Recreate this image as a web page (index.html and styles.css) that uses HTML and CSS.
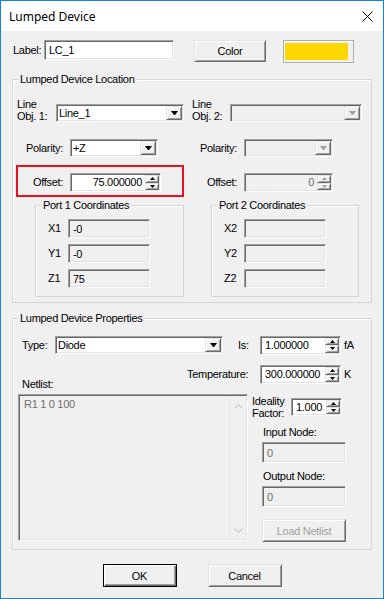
FILE: index.html
```html
<!DOCTYPE html>
<html lang="en">
<head>
    <meta charset="UTF-8">
    <meta name="viewport" content="width=device-width, initial-scale=1.0">
    <title>Lumped Device</title>
    <link rel="stylesheet" href="styles.css">
</head>
<body>
<div class="dlg">
    <div class="titlebar">
        <span class="title">Lumped Device</span>
        <svg class="close" width="11" height="11" viewBox="0 0 11 11"><path d="M0.5 0.5L10.5 10.5M10.5 0.5L0.5 10.5" stroke="#000" stroke-width="1" fill="none"/></svg>
    </div>

    <div class="client">
        <div class="label-row">
            <span class="lbl label-lbl">Label:</span>
            <div class="edit sunk label-edit">LC_1</div>
            <div class="btn raised color-btn">Color</div>
            <div class="swatch"><div class="swatch-fill"></div></div>
        </div>

        <!-- location -->
        <div class="frame group loc-group">
            <div class="group-title">Lumped Device Location</div>

            <div class="loc-row line-row">
                <div class="cell c1">
                    <span class="lbl two-line line1-lbl">Line<br>Obj. 1:</span>
                    <div class="combo sunk line1-combo">
                        <span class="combo-text">Line_1</span>
                        <span class="combo-btn raised"><svg width="7" height="4" viewBox="0 0 7 4"><path d="M0 0H7L4 4H3Z" fill="#000"/></svg></span>
                    </div>
                </div>
                <div class="cell c2">
                    <span class="lbl two-line line2-lbl">Line<br>Obj. 2:</span>
                    <div class="combo sunk off line2-combo">
                        <span class="combo-text"></span>
                        <span class="combo-btn raised"><svg width="7" height="4" viewBox="0 0 7 4"><path d="M0 0H7L4 4H3Z" fill="#a0a0a0"/></svg></span>
                    </div>
                </div>
            </div>

            <div class="loc-row pol-row">
                <div class="cell c1">
                    <span class="lbl rlbl pol1-lbl">Polarity:</span>
                    <div class="combo sunk pol1-combo">
                        <span class="combo-text">+Z</span>
                        <span class="combo-btn raised"><svg width="7" height="4" viewBox="0 0 7 4"><path d="M0 0H7L4 4H3Z" fill="#000"/></svg></span>
                    </div>
                </div>
                <div class="cell c2">
                    <span class="lbl rlbl pol2-lbl">Polarity:</span>
                    <div class="combo sunk off pol2-combo">
                        <span class="combo-text"></span>
                        <span class="combo-btn raised"><svg width="7" height="4" viewBox="0 0 7 4"><path d="M0 0H7L4 4H3Z" fill="#a0a0a0"/></svg></span>
                    </div>
                </div>
            </div>

            <div class="loc-row off-row">
                <div class="cell c1">
                    <div class="hl">
                        <span class="lbl rlbl off1-lbl">Offset:</span>
                        <div class="spin sunk off1-spin">
                            <span class="spin-text right">75.000000</span>
                            <span class="spin-btns">
                                <span class="raised"><svg width="5" height="3" viewBox="0 0 5 3"><path d="M2.5 0L5 3H0Z" fill="#000"/></svg></span>
                                <span class="raised"><svg width="5" height="3" viewBox="0 0 5 3"><path d="M0 0H5L2.5 3Z" fill="#000"/></svg></span>
                            </span>
                        </div>
                    </div>
                </div>
                <div class="cell c2">
                    <span class="lbl rlbl off2-lbl">Offset:</span>
                    <div class="spin sunk off off2-spin">
                        <span class="spin-text right dim">0</span>
                        <span class="spin-btns">
                            <span class="raised"><svg width="5" height="3" viewBox="0 0 5 3"><path d="M2.5 0L5 3H0Z" fill="#a0a0a0"/></svg></span>
                            <span class="raised"><svg width="5" height="3" viewBox="0 0 5 3"><path d="M0 0H5L2.5 3Z" fill="#a0a0a0"/></svg></span>
                        </span>
                    </div>
                </div>
            </div>

            <div class="loc-row port-row">
                <div class="cell c1">
                    <div class="frame port port1">
                        <div class="group-title">Port 1 Coordinates</div>
                        <div class="prow first"><span class="lbl plbl">X1</span><div class="edit sunk ro pbox">-0</div></div>
                        <div class="prow"><span class="lbl plbl">Y1</span><div class="edit sunk ro pbox">-0</div></div>
                        <div class="prow"><span class="lbl plbl">Z1</span><div class="edit sunk ro pbox">75</div></div>
                    </div>
                </div>
                <div class="cell c2">
                    <div class="frame port port2">
                        <div class="group-title">Port 2 Coordinates</div>
                        <div class="prow first"><span class="lbl plbl">X2</span><div class="edit sunk ro pbox"></div></div>
                        <div class="prow"><span class="lbl plbl">Y2</span><div class="edit sunk ro pbox"></div></div>
                        <div class="prow"><span class="lbl plbl">Z2</span><div class="edit sunk ro pbox"></div></div>
                    </div>
                </div>
            </div>
        </div>

        <!-- properties -->
        <div class="frame group prop-group">
            <div class="group-title">Lumped Device Properties</div>

            <div class="type-row">
                <span class="lbl type-lbl">Type:</span>
                <div class="combo sunk type-combo">
                    <span class="combo-text">Diode</span>
                    <span class="combo-btn raised"><svg width="7" height="4" viewBox="0 0 7 4"><path d="M0 0H7L4 4H3Z" fill="#000"/></svg></span>
                </div>
                <span class="lbl is-lbl">Is:</span>
                <div class="spin sunk is-spin">
                    <span class="spin-text">1.000000</span>
                    <span class="spin-btns">
                        <span class="raised"><svg width="5" height="3" viewBox="0 0 5 3"><path d="M2.5 0L5 3H0Z" fill="#000"/></svg></span>
                        <span class="raised"><svg width="5" height="3" viewBox="0 0 5 3"><path d="M0 0H5L2.5 3Z" fill="#000"/></svg></span>
                    </span>
                </div>
                <span class="lbl unit">fA</span>
            </div>

            <div class="temp-row">
                <span class="lbl temp-lbl">Temperature:</span>
                <div class="spin sunk temp-spin">
                    <span class="spin-text">300.000000</span>
                    <span class="spin-btns">
                        <span class="raised"><svg width="5" height="3" viewBox="0 0 5 3"><path d="M2.5 0L5 3H0Z" fill="#000"/></svg></span>
                        <span class="raised"><svg width="5" height="3" viewBox="0 0 5 3"><path d="M0 0H5L2.5 3Z" fill="#000"/></svg></span>
                    </span>
                </div>
                <span class="lbl unit">K</span>
            </div>

            <div class="net-row">
                <div class="net-col">
                    <span class="lbl net-lbl">Netlist:</span>
                    <div class="netlist sunk">
                        <div class="net-text">R1 1 0 100</div>
                        <div class="vscroll">
                            <svg width="9" height="5" viewBox="0 0 9 5"><path d="M0.5 4.5L4.5 0.5L8.5 4.5" stroke="#b4b4b4" fill="none"/></svg>
                            <svg width="9" height="5" viewBox="0 0 9 5"><path d="M0.5 0.5L4.5 4.5L8.5 0.5" stroke="#b4b4b4" fill="none"/></svg>
                        </div>
                    </div>
                </div>
                <div class="side-col">
                    <div class="ideal-row">
                        <span class="lbl two-line ideal-lbl">Ideality<br>Factor:</span>
                        <div class="spin sunk ideal-spin">
                            <span class="spin-text">1.000</span>
                            <span class="spin-btns">
                                <span class="raised"><svg width="5" height="3" viewBox="0 0 5 3"><path d="M2.5 0L5 3H0Z" fill="#000"/></svg></span>
                                <span class="raised"><svg width="5" height="3" viewBox="0 0 5 3"><path d="M0 0H5L2.5 3Z" fill="#000"/></svg></span>
                            </span>
                        </div>
                    </div>
                    <span class="lbl node-lbl">Input Node:</span>
                    <div class="edit sunk ro dim node-box">0</div>
                    <span class="lbl node-lbl">Output Node:</span>
                    <div class="edit sunk ro dim node-box">0</div>
                    <div class="btn raised load-btn">Load Netlist</div>
                </div>
            </div>
        </div>

        <div class="btn-row">
            <div class="btn raised ok-btn">OK</div>
            <div class="btn raised cancel-btn">Cancel</div>
        </div>
    </div>
</div>
</body>
</html>
```

FILE: styles.css
```css
* {
    box-sizing: border-box;
}

body {
    margin: 0;
    font-family: "Liberation Sans", Arial, sans-serif;
    font-size: 11px;
    letter-spacing: -0.3px;
    color: #000;
    background: #fff;
}

.dlg {
    width: 384px;
    height: 599px;
    border: 1px solid #1883d7;
    background: #f0f0f0;
    display: flex;
    flex-direction: column;
}

.titlebar {
    flex: none;
    height: 30px;
    background: #fff;
    display: flex;
    align-items: center;
    padding: 0 10px 0 8px;
}

.title {
    font-family: "Noto Sans", "Open Sans", sans-serif;
    font-size: 12px;
    letter-spacing: 0;
}

.close {
    margin-left: auto;
}

.client {
    padding-top: 9px;
}

/* common bits */
.lbl {
    line-height: 13px;
    white-space: nowrap;
}

.two-line {
    line-height: 12px;
}

.rlbl {
    text-align: right;
    margin-right: 7px;
}

.dim {
    color: #6d6d6d;
}

.sunk {
    border: 1px solid;
    border-color: #a0a0a0 #fff #fff #a0a0a0;
    box-shadow: inset 1px 1px #696969, inset -1px -1px #e3e3e3;
}

.raised {
    border: 1px solid;
    border-color: #e3e3e3 #696969 #696969 #e3e3e3;
    box-shadow: inset 1px 1px #fff, inset -1px -1px #a0a0a0;
    background: #f0f0f0;
}

.edit {
    background: #fff;
    padding: 0 4px;
    display: flex;
    align-items: center;
    white-space: nowrap;
}

.edit.ro {
    background: #f0f0f0;
}

.btn {
    display: flex;
    align-items: center;
    justify-content: center;
}

.combo {
    height: 18px;
    display: flex;
    padding: 1px;
    background: #fff;
}

.combo.off {
    background: #f0f0f0;
}

.combo-text {
    flex: 1;
    padding-left: 1px;
    line-height: 14px;
}

.combo-btn {
    width: 16px;
    display: flex;
    align-items: center;
    justify-content: center;
}

.spin {
    height: 19px;
    display: flex;
    padding: 1px;
    background: #fff;
}

.spin.off {
    background: #f0f0f0;
}

.spin-text {
    flex: 1;
    min-width: 0;
    overflow: hidden;
    white-space: nowrap;
    line-height: 15px;
    padding: 0 3px;
}

.spin-text.right {
    text-align: right;
}

.spin-btns {
    width: 14px;
    display: flex;
    flex-direction: column;
}

.spin-btns span {
    flex: 1;
    display: flex;
    align-items: center;
    justify-content: center;
}

/* label row */
.label-row {
    display: flex;
    align-items: flex-start;
    height: 23px;
}

.label-lbl {
    margin: 4px 0 0 12px;
    width: 31px;
}

.label-edit {
    width: 130px;
    height: 20px;
}

.color-btn {
    margin-left: 20px;
    width: 72px;
    height: 22px;
}

.swatch {
    margin-left: 17px;
    width: 71px;
    height: 23px;
    border: 1px solid #adadad;
    padding: 2px 5px 2px 1px;
    background: #f0f0f0;
    box-shadow: inset 1px 1px #fff;
}

.swatch-fill {
    height: 100%;
    background: #ffd700;
}

/* group boxes */
.frame {
    border: 1px solid #d5d5d5;
    box-shadow: inset 1px 1px #fff;
}

.group {
    margin-left: 11px;
    width: 360px;
}

.group-title {
    display: table;
    margin: -7px 0 0 5px;
    padding: 0 2px;
    line-height: 13px;
    background: #f0f0f0;
    white-space: nowrap;
}

.loc-group {
    margin-top: 16px;
    padding-bottom: 5px;
}

.loc-row {
    display: flex;
}

.cell {
    display: flex;
}

.c1 {
    width: 175px;
}

.line-row {
    margin-top: 12px;
}

.line-row .cell {
    align-items: flex-end;
}

.line1-lbl {
    margin-left: 4px;
    width: 39px;
}

.line1-combo {
    width: 128px;
}

.line2-lbl {
    margin-left: 4px;
    width: 38px;
}

.line2-combo {
    width: 132px;
}

.pol-row {
    margin-top: 17px;
}

.pol-row .cell {
    align-items: center;
}

.pol1-lbl {
    width: 50px;
}

.pol1-combo {
    width: 88px;
}

.pol2-lbl {
    width: 49px;
}

.pol2-combo {
    width: 89px;
}

.off-row {
    margin-top: 8px;
    align-items: flex-start;
}

.hl {
    margin-left: 3px;
    width: 168px;
    height: 32px;
    border: 2px solid #e81123;
    padding-top: 6px;
    display: flex;
    align-items: flex-start;
}

.off1-lbl {
    width: 45px;
    line-height: 19px;
}

.off1-spin {
    width: 91px;
}

.off-row .c2 {
    margin-top: 8px;
}

.off2-lbl {
    width: 49px;
    line-height: 19px;
}

.off2-spin {
    width: 89px;
}

.port-row {
    margin-top: 8px;
}

.port {
    padding-bottom: 8px;
}

.port1 {
    margin-left: 22px;
    width: 149px;
}

.port2 {
    margin-left: 23px;
    width: 148px;
}

.prow {
    display: flex;
    align-items: center;
    margin-top: 6px;
    padding-left: 12px;
}

.prow.first {
    margin-top: 7px;
}

.plbl {
    width: 20px;
}

.pbox {
    width: 82px;
    height: 19px;
}

/* properties */
.prop-group {
    margin-top: 15px;
    padding-bottom: 7px;
}

.type-row {
    display: flex;
    align-items: center;
    height: 20px;
    margin-top: 10px;
}

.type-lbl {
    margin-left: 9px;
    width: 33px;
}

.type-combo {
    width: 168px;
}

.is-lbl {
    margin-left: 15px;
    width: 22px;
}

.is-spin,
.temp-spin {
    width: 81px;
}

.unit {
    margin-left: 3px;
}

.temp-row {
    display: flex;
    align-items: center;
    margin-top: 10px;
}

.temp-lbl {
    margin-left: 174px;
    width: 73px;
}

.net-row {
    display: flex;
    margin-top: -6px;
}

.net-col {
    margin-left: 5px;
    width: 230px;
}

.net-lbl {
    display: block;
    margin-left: 4px;
}

.netlist {
    margin-top: 3px;
    height: 147px;
    display: flex;
    padding: 1px;
    background: #f0f0f0;
}

.net-text {
    flex: 1;
    padding: 2px 0 0 4px;
    line-height: 13px;
    color: #6d6d6d;
}

.vscroll {
    width: 17px;
    display: flex;
    flex-direction: column;
    justify-content: space-between;
    align-items: center;
    padding: 8px 0 6px;
    border-left: 1px solid #e6e6e6;
}

.side-col {
    margin-left: 4px;
}

.ideal-row {
    display: flex;
    align-items: center;
    margin-top: 17px;
}

.ideal-lbl {
    width: 39px;
}

.ideal-spin {
    width: 51px;
    height: 18px;
}

.node-lbl {
    display: block;
    margin: 7px 0 0 11px;
}

.node-box {
    margin: 3px 0 0 10px;
    width: 84px;
    height: 21px;
}

.load-btn {
    margin: 12px 0 0 10px;
    width: 84px;
    height: 23px;
    color: #a0a0a0;
}

/* bottom buttons */
.btn-row {
    display: flex;
    justify-content: center;
    gap: 31px;
    margin-top: 14px;
}

.ok-btn,
.cancel-btn {
    width: 74px;
    height: 23px;
}

.ok-btn {
    border-color: #000;
    box-shadow: inset 1px 1px #fff, inset -1px -1px #696969, inset -2px -2px #a0a0a0;
}
```
